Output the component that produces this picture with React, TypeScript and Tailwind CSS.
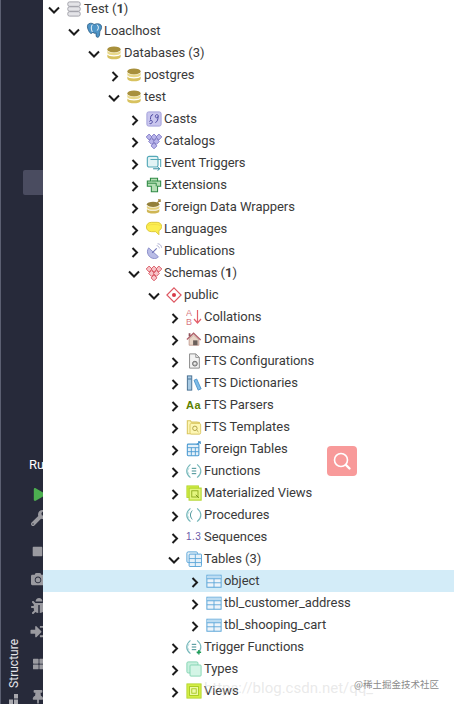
import type { ReactNode } from 'react';
import { FaBug, FaCamera, FaPlay, FaSignInAlt, FaStop, FaThLarge, FaThumbtack, FaWrench } from 'react-icons/fa';

const Svg = ({ children }: { children: ReactNode }) => (
  <svg width="16" height="16" viewBox="0 0 18 18" fill="none" className="shrink-0">
    {children}
  </svg>
);

const ServerIcon = () => (
  <Svg>
    <rect x="2" y="1" width="14" height="5" rx="2" fill="#e4e4e8" stroke="#9a9aa2" />
    <rect x="2" y="6.500" width="14" height="5" rx="2" fill="#e4e4e8" stroke="#9a9aa2" />
    <rect x="2" y="12" width="14" height="5" rx="2" fill="#e4e4e8" stroke="#9a9aa2" />
  </Svg>
);

const ElephantIcon = () => (
  <svg width="18" height="18" viewBox="0 0 20 20" fill="none" className="shrink-0">
    <path d="M3 2c3-1.500 5 0 6 .8 2-1 5-1.300 7 0 2 1.500 1.500 5-.2 7-.6.800-.6 3-.8 5-.2 2-2.500 3-3.500 1.500-.6-1-.3-3-.3-4-2 .6-3 0-3.500-1-1 1.500-2.500 2-3.500.5C2.500 9.500 0 4 3 2z" fill="#4d94c7" stroke="#1d4f78" strokeWidth=".8" />
    <path d="M7 3c-1.500 2-1.500 5 0 8M12 3c2 1 2.500 4 .5 6.500" stroke="#fff" strokeWidth="1" />
  </svg>
);

const DbIcon = () => (
  <Svg>
    <ellipse cx="9" cy="5" rx="7.500" ry="3.300" fill="#a8903c" />
    <path d="M1.500 6.500c1 2.800 14 2.800 15 0v2.800c-1 3-14 3-15 0z" fill="#e9d98a" />
    <path d="M1.500 10.800c1 2.800 14 2.800 15 0v2.700c-1 3.500-14 3.500-15 0z" fill="#d8c25f" />
  </Svg>
);

const CastsIcon = () => (
  <Svg>
    <rect x="1" y="1" width="16" height="16" rx="2" fill="#c9c6ee" stroke="#9d99d8" />
    <path d="M8 4C5.500 4 5 7 5 9.500M4 14c2 1 3.500-1 3-2.500S4.500 10 4 12M14 6c0-2.500-3.500-2.500-3.500 0s3.500 2 3 0c.2 3-.5 6-3 7" stroke="#4b47a0" strokeWidth="1.100" />
  </Svg>
);

const Diamonds = ({ fill, stroke }: { fill: string; stroke: string }) => (
  <Svg>
    {[
      [3.500, 4.500],
      [9, 4.500],
      [14.500, 4.500],
      [6.250, 9.500],
      [11.750, 9.500],
      [9, 14.500],
    ].map(([x, y]) => (
      <path key={`${x}-${y}`} d={`M${x} ${y - 3.300}l3.300 3.300-3.300 3.300-3.300-3.300z`} fill={fill} stroke={stroke} />
    ))}
  </Svg>
);

const EventIcon = () => (
  <Svg>
    <rect x="1.500" y="1.500" width="12" height="12" rx="2" fill="#e2f3f5" stroke="#55a9b8" strokeWidth="1.300" />
    <path d="M5 5h11.500v8.500" stroke="#55a9b8" strokeWidth="1.200" />
    <path d="M8 15.500h7m-2-2 2.500 2-2.500 2" stroke="#2f8aa0" strokeWidth="1.100" />
  </Svg>
);

const ExtensionIcon = () => (
  <Svg>
    <path d="M5 1.500h8v3h3.500v6H13v6H6v-6H1.500v-6H5z" fill="#b5dfb5" stroke="#2f8a45" strokeWidth="1.200" />
    <path d="M1.500 7h10v3.500M6 4.500h7" stroke="#2f8a45" strokeWidth="1.100" />
  </Svg>
);

const FdwIcon = () => (
  <Svg>
    <ellipse cx="8" cy="6" rx="7" ry="3" fill="#94803a" />
    <path d="M1 7.500c1 2.800 13 2.800 14 0V10c-1 2.800-13 2.800-14 0z" fill="#e4cf7a" />
    <path d="M1 11.200c1 2.800 13 2.800 14 0v2.800c-1 3-13 3-14 0z" fill="#cfb654" />
    <path d="M12.500 4.500 16 1m-2.500 0H16v2.500" stroke="#a2853d" strokeWidth="1.200" />
  </Svg>
);

const LanguageIcon = () => (
  <Svg>
    <path d="M6 1.500h6.500c3 0 5 2 5 4.500s-1 4-3 4.700v4.800L11 12H6c-3.300 0-5.500-2.200-5.500-5.200S2.700 1.500 6 1.500z" fill="#fcee4f" stroke="#dcc93a" strokeWidth="1.100" />
    <path d="M2 5c3-1.500 11-1.500 14 0" stroke="#f0dc45" />
  </Svg>
);

const DishIcon = () => (
  <Svg>
    <path d="M3 5.500c-3.500 4.500 0 12 6.500 12 2 0 3.500-.7 4.500-2z" fill="#b9bce6" stroke="#8286c5" />
    <path d="M7 11l5-5" stroke="#6e72b5" strokeWidth="1.200" />
    <path d="M12 3c1.500 0 3 1.500 3 3M13 .8c2.500 0 4.500 2 4.500 4.500" stroke="#a7a9cf" />
  </Svg>
);

const PublicIcon = () => (
  <Svg>
    <path d="M9 1 17 9 9 17 1 9z" fill="#fff" stroke="#dd5560" strokeWidth="1.300" />
    <circle cx="9" cy="9" r="2.300" fill="#d83a48" />
  </Svg>
);

const CollationIcon = () => (
  <svg width="18" height="18" viewBox="0 0 18 18" fill="none" className="shrink-0">
    <text x="0" y="7.500" fontSize="9" fill="#d87a84" fontFamily="Liberation Sans, sans-serif">A</text>
    <text x="0" y="16.500" fontSize="9" fill="#d87a84" fontFamily="Liberation Sans, sans-serif">B</text>
    <path d="M11.500 2v13m-3.500-4 3.500 4 3.500-4" stroke="#e4606c" strokeWidth="1.200" />
  </svg>
);

const HouseIcon = () => (
  <Svg>
    <path d="M1 9.500 8.500 2.500 16.500 10" stroke="#b0616a" strokeWidth="1.500" fill="none" />
    <path d="M3.500 9 8.500 4.500 14.500 10V16H3.500z" fill="#e8d6c8" stroke="#b98a80" strokeWidth=".8" />
    <rect x="8" y="10.500" width="5" height="5.500" fill="#6a5f5a" />
    <rect x="3" y="2.500" width="2" height="3.500" fill="#8e5058" />
  </Svg>
);

const FtsConfigIcon = () => (
  <Svg>
    <path d="M4 1h7l4 4v12H4z" fill="#f3f3f3" stroke="#8c8c8c" strokeWidth="1.100" />
    <path d="M11 1v4h4" stroke="#8c8c8c" />
    <circle cx="10" cy="12" r="2.700" fill="#bbb" stroke="#666" />
    <circle cx="10" cy="12" r=".9" fill="#fff" />
  </Svg>
);

const BooksIcon = () => (
  <Svg>
    <rect x="1.500" y="1" width="5" height="16" fill="#a9cbe4" stroke="#40698c" />
    <path d="M9 6l3-1.500 5 11-3.300 1.500z" fill="#7fbde8" stroke="#4a92c9" />
    <path d="M2 4.500h4" stroke="#40698c" />
  </Svg>
);

const ParserIcon = () => (
  <span className="text-[11px] font-bold leading-none tracking-[0.5px] text-[#5d8200] font-['Liberation_Sans',sans-serif]">
    Aa
  </span>
);

const TemplateIcon = () => (
  <Svg>
    <path d="M1.500 2h3.500l1 1.500h6l3 .5v12.500h-13.500z" fill="#fdf6b4" stroke="#d9c660" strokeWidth="1.200" />
    <rect x="4.500" y="5" width="12" height="12" rx="1.500" fill="#fdf6b4" stroke="#d9c660" />
    <circle cx="10" cy="10.500" r="2.500" stroke="#a89a3c" />
    <path d="m12 12.500 2 2" stroke="#a89a3c" />
  </Svg>
);

const ForeignIcon = () => (
  <Svg>
    <rect x="1.500" y="3.500" width="13" height="13" rx="1" fill="#e6f1f9" stroke="#4a9ad1" strokeWidth="1.200" />
    <path d="M1.500 7.500h13M6 7.500v9M10.500 7.500v9M1.500 12h13" stroke="#4a9ad1" />
    <path d="M12 4l4-3m-2.500 0H16v2.500" stroke="#3f8fc9" strokeWidth="1.200" />
  </Svg>
);

const FuncIcon = ({ plus }: { plus?: boolean }) => (
  <Svg>
    <path d="M5 1.500C2 4 .8 6 .8 9s1.200 5 4.200 7.500" stroke="#77b8bb" strokeWidth="1.300" />
    <path d="M3.500 5.500 1.500 9l2 3.500" stroke="#a8d5d6" strokeWidth="1" />
    <path d="M12.500 1.500c3 2.500 4.200 4.500 4.200 7.500s-1.200 5-4.200 7.500" stroke="#77b8bb" strokeWidth="1.300" />
    <path d="M6.500 6h5M6.500 9h5M6.500 12h5" stroke="#3d8c90" strokeWidth="1.100" />
    {plus && <path d="M14.500 12.500v5M12 15h5" stroke="#1f9c55" strokeWidth="1.600" />}
  </Svg>
);

const MatViewIcon = () => (
  <Svg>
    <rect x="1" y="1" width="13" height="13" fill="#d4ee44" stroke="#b3d630" />
    <rect x="3.500" y="3.500" width="13.500" height="13.500" fill="#e4f67e" stroke="#b3d630" strokeWidth="1.300" />
    <rect x="6.500" y="6.500" width="7" height="7" stroke="#8aa81a" />
    <path d="M11 11l3.500 3.500" stroke="#6f8a12" />
  </Svg>
);

const ProcIcon = () => (
  <Svg>
    <path d="M5 1.500C2 4 .8 6 .8 9s1.200 5 4.200 7.500" stroke="#77b8bb" strokeWidth="1.300" />
    <path d="M3.500 5.500 1.500 9l2 3.500" stroke="#a8d5d6" />
    <path d="M12.500 1.500c3 2.500 4.200 4.500 4.200 7.500s-1.200 5-4.200 7.500" stroke="#77b8bb" strokeWidth="1.300" />
    <path d="M7 4C5.500 6 5 7.500 5 9s.5 3 2 5" stroke="#3d8c90" />
  </Svg>
);

const SeqIcon = () => (
  <span className="text-[10px] leading-none tracking-[0.4px] text-[#6a5aa8] font-['Liberation_Sans',sans-serif]">
    1.3
  </span>
);

const TablesIcon = () => (
  <Svg>
    <rect x="1" y="1" width="12" height="12" rx="1.500" fill="#eaf4fb" stroke="#5aa5d8" strokeWidth="1.100" />
    <rect x="3.500" y="3.500" width="14" height="14" rx="1" fill="#e6f1f9" stroke="#5aa5d8" strokeWidth="1.100" />
    <path d="M3.500 8.500h14M10.500 3.500v14M3.500 13h14" stroke="#5aa5d8" />
  </Svg>
);

const TableIcon = () => (
  <Svg>
    <rect x="1" y="2.500" width="16" height="13.500" fill="#eef4fa" stroke="#5aa5d8" strokeWidth="1.100" />
    <rect x="1.500" y="3" width="15" height="3.500" fill="#bcdcf2" />
    <path d="M1 6.500h16M1 11h16M9 6.500V16" stroke="#5aa5d8" />
  </Svg>
);

const TypesIcon = () => (
  <Svg>
    <rect x="1" y="1" width="12.500" height="12.500" rx="1.500" fill="#c8f0de" stroke="#7fd3b0" />
    <rect x="4.500" y="4.500" width="12.500" height="12.500" rx="1" fill="#d4f5e6" stroke="#7fd3b0" />
  </Svg>
);

const ViewsIcon = () => (
  <Svg>
    <rect x="1" y="1" width="16" height="16" fill="#d4ee44" stroke="#b3d630" />
    <rect x="4" y="4" width="10" height="10" fill="#eef9a8" stroke="#a4c820" />
    <rect x="6.500" y="6.500" width="5" height="5" stroke="#a4c820" />
  </Svg>
);

type Row = { depth: number; label: string; count?: number; open?: boolean; icon: ReactNode; selected?: boolean };

const rows: Row[] = [
  { depth: 0, label: 'Test', count: 1, open: true, icon: <ServerIcon /> },
  { depth: 1, label: 'Loaclhost', open: true, icon: <ElephantIcon /> },
  { depth: 2, label: 'Databases', count: 3, open: true, icon: <DbIcon /> },
  { depth: 3, label: 'postgres', icon: <DbIcon /> },
  { depth: 3, label: 'test', open: true, icon: <DbIcon /> },
  { depth: 4, label: 'Casts', icon: <CastsIcon /> },
  { depth: 4, label: 'Catalogs', icon: <Diamonds fill="#b9b5ea" stroke="#7d78c4" /> },
  { depth: 4, label: 'Event Triggers', icon: <EventIcon /> },
  { depth: 4, label: 'Extensions', icon: <ExtensionIcon /> },
  { depth: 4, label: 'Foreign Data Wrappers', icon: <FdwIcon /> },
  { depth: 4, label: 'Languages', icon: <LanguageIcon /> },
  { depth: 4, label: 'Publications', icon: <DishIcon /> },
  { depth: 4, label: 'Schemas', count: 1, open: true, icon: <Diamonds fill="#f7c4c8" stroke="#d8505c" /> },
  { depth: 5, label: 'public', open: true, icon: <PublicIcon /> },
  { depth: 6, label: 'Collations', icon: <CollationIcon /> },
  { depth: 6, label: 'Domains', icon: <HouseIcon /> },
  { depth: 6, label: 'FTS Configurations', icon: <FtsConfigIcon /> },
  { depth: 6, label: 'FTS Dictionaries', icon: <BooksIcon /> },
  { depth: 6, label: 'FTS Parsers', icon: <ParserIcon /> },
  { depth: 6, label: 'FTS Templates', icon: <TemplateIcon /> },
  { depth: 6, label: 'Foreign Tables', icon: <ForeignIcon /> },
  { depth: 6, label: 'Functions', icon: <FuncIcon /> },
  { depth: 6, label: 'Materialized Views', icon: <MatViewIcon /> },
  { depth: 6, label: 'Procedures', icon: <ProcIcon /> },
  { depth: 6, label: 'Sequences', icon: <SeqIcon /> },
  { depth: 6, label: 'Tables', count: 3, open: true, icon: <TablesIcon /> },
  { depth: 7, label: 'object', selected: true, icon: <TableIcon /> },
  { depth: 7, label: 'tbl_customer_address', icon: <TableIcon /> },
  { depth: 7, label: 'tbl_shooping_cart', icon: <TableIcon /> },
  { depth: 6, label: 'Trigger Functions', icon: <FuncIcon plus /> },
  { depth: 6, label: 'Types', icon: <TypesIcon /> },
  { depth: 6, label: 'Views', icon: <ViewsIcon /> },
];

const Chevron = ({ open }: { open?: boolean }) => (
  <svg width="12" height="14" viewBox="0 0 12 14" fill="none" className="shrink-0">
    {open ? (
      <path d="M1 5.500 6 10.500l5-5" stroke="#1c1c1c" strokeWidth="2" />
    ) : (
      <path d="M4.500 4 9 8.500 4.500 13" stroke="#1c1c1c" strokeWidth="2" />
    )}
  </svg>
);

function TreeRow({ row }: { row: Row }) {
  return (
    <div
      className={`h-[22px] flex items-center ${row.selected ? 'bg-[#d3ecf8]' : ''}`}
      style={{ paddingLeft: 5 + row.depth * 20 }}
    >
      <Chevron open={row.open} />
      <div className="ml-[6px] w-[18px] shrink-0 flex items-center">{row.icon}</div>
      <span className="text-[13px] tracking-[-0.05px] text-[#3a3a3a] whitespace-nowrap">
        {row.label}
        {row.count !== undefined && (
          <>
            {' ('}
            <span className={row.depth === 2 || row.depth === 6 ? '' : 'font-bold'}>{row.count}</span>
            {')'}
          </>
        )}
      </span>
    </div>
  );
}

function Sidebar() {
  return (
    <aside className="w-[43px] h-[704px] shrink-0 flex overflow-hidden bg-[#272a3a] border-l border-[#5c6072] text-[#9a9aa0]">
      <div className="w-[22px] shrink-0 flex flex-col items-center justify-end pl-[3px]">
        <span className="[writing-mode:vertical-rl] rotate-180 text-[12px] leading-none text-[#e6e6ea] mb-[6px]">
          Structure
        </span>
        <svg width="9" height="10" viewBox="0 0 9 10" className="shrink-0 fill-[#a8a8ae]">
          <rect x="5" y="0" width="4" height="4.500" />
          <rect x="0" y="5.500" width="4" height="4.500" />
          <rect x="5" y="5.500" width="4" height="4.500" />
        </svg>
      </div>
      <div className="flex-1 flex flex-col min-w-0">
        <div className="mt-[170px] h-[28px] bg-[#4a4c60] rounded-l-[2px]" />
        <span className="mt-[262px] pl-[6px] text-[13px] leading-[16px] text-white whitespace-nowrap">Ru</span>
        <FaPlay className="mt-[15px] ml-[10px] w-[13px] h-[13px] shrink-0 text-[#4caf50]" />
        <FaWrench className="mt-[9px] ml-[8px] w-[16px] h-[16px] shrink-0" />
        <FaStop className="mt-[20px] ml-[9px] w-[11px] h-[11px] shrink-0" />
        <FaCamera className="mt-[15px] ml-[7px] w-[16px] h-[14px] shrink-0" />
        <FaBug className="mt-[12px] ml-[8px] w-[16px] h-[16px] shrink-0" />
        <FaSignInAlt className="mt-[10px] ml-[7px] w-[16px] h-[15px] shrink-0" />
        <FaThLarge className="mt-[19px] ml-[8px] w-[16px] h-[12px] shrink-0" />
        <FaThumbtack className="mt-[20px] ml-[8px] w-[14px] h-[14px] shrink-0" />
      </div>
    </aside>
  );
}

export default function App() {
  return (
    <div className="relative w-[454px] h-[704px] flex overflow-hidden bg-white font-['Roboto',sans-serif]">
      <Sidebar />
      <main className="flex-1 min-w-0 -mt-[2px]">
        {rows.map((row) => (
          <TreeRow key={`${row.depth}-${row.label}`} row={row} />
        ))}
      </main>

      {/* floating search button */}
      <div className="absolute left-[327px] top-[446px] w-[30px] h-[30px] rounded-[4px] bg-[#f89a9a] flex items-center justify-center">
        <svg width="22" height="22" viewBox="0 0 22 22" fill="none">
          <circle cx="10" cy="10" r="6.500" stroke="#fff" strokeWidth="1.600" />
          <path d="m15 15 3.500 3.500" stroke="#fff" strokeWidth="2.400" strokeLinecap="round" />
        </svg>
      </div>

      {/* watermarks */}
      <span className="absolute left-[204px] top-[677px] text-[15px] text-[#c9c9c9]/40 whitespace-nowrap pointer-events-none">
        https://blog.csdn.net/qq_
      </span>
      <span className="absolute left-[354px] top-[677px] text-[9.500px] text-[#8a8a8a] whitespace-nowrap pointer-events-none font-['Noto_Sans_CJK_SC',sans-serif]">
        @稀土掘金技术社区
      </span>
    </div>
  );
}
